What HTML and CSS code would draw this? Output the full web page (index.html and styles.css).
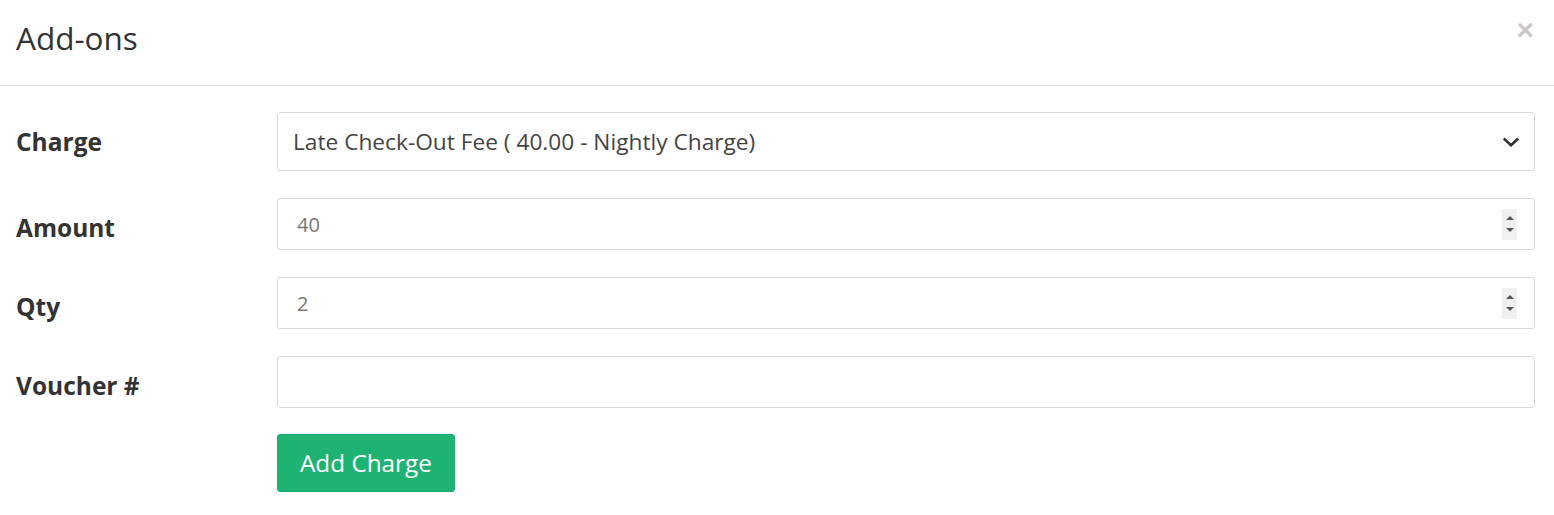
FILE: index.html
```html
<!DOCTYPE html>
<html>
<head>
<meta charset="utf-8">
<link rel="stylesheet" href="styles.css">
</head>
<body>
<div class="modal">
  <div class="modal-header">
    <h4 class="modal-title">Add-ons</h4>
    <button class="close" type="button">×</button>
  </div>
  <div class="modal-body">
    <div class="row">
      <label class="label">Charge</label>
      <div class="control select-control">
        <span class="select-text">Late Check-Out Fee ( 40.00 - Nightly Charge)</span>
        <svg class="chevron" width="18" height="10" viewBox="0 0 18 10"><path d="M1.8 1.5 L9 8.3 L16.2 1.5" fill="none" stroke="#333" stroke-width="2.6"/></svg>
      </div>
    </div>
    <div class="row">
      <label class="label">Amount</label>
      <div class="control input-control">
        <input class="field muted" type="text" value="40">
        <span class="spinner"><span class="up"></span><span class="down"></span></span>
      </div>
    </div>
    <div class="row">
      <label class="label">Qty</label>
      <div class="control input-control">
        <input class="field muted" type="text" value="2">
        <span class="spinner"><span class="up"></span><span class="down"></span></span>
      </div>
    </div>
    <div class="row">
      <label class="label">Voucher #</label>
      <div class="control input-control">
        <input class="field" type="text" value="">
      </div>
    </div>
    <div class="row">
      <span class="label"></span>
      <button class="btn-add" type="button">Add Charge</button>
    </div>
  </div>
</div>
</body>
</html>
```
FILE: styles.css
```css
* { box-sizing: border-box; }
html, body { margin: 0; padding: 0; background: #fff; }
body { font-family: "Open Sans", "Noto Sans", sans-serif; color: #333; }

.modal { width: 1554px; }

.modal-header {
  display: flex;
  justify-content: space-between;
  align-items: flex-start;
  height: 86px;
  border-bottom: 1px solid #e5e5e5;
  padding: 16px 20px 0 16px;
}
.modal-title {
  margin: 0;
  font-size: 31.5px;
  font-weight: 400;
  line-height: 44px;
  color: #333;
}
.close {
  border: 0;
  background: none;
  padding: 0;
  margin-top: 0;
  font-family: "Liberation Sans", Arial, sans-serif;
  font-size: 30px;
  font-weight: 700;
  line-height: 28px;
  color: #c9c9c9;
  cursor: pointer;
}

.modal-body {
  padding: 26px 19px 20px 16px;
  display: flex;
  flex-direction: column;
  gap: 27px;
}
.row {
  display: flex;
  align-items: flex-start;
}
.label {
  width: 261px;
  flex: none;
  font-size: 24.5px;
  font-weight: 700;
  line-height: 34px;
  padding-top: 13px;
  color: #333;
}
.control {
  flex: 1;
  display: flex;
  align-items: center;
  border: 1px solid #d9d9d9;
  border-radius: 3px;
  background: #fff;
}
.select-control {
  height: 59px;
  padding: 0 15px 0 15px;
  justify-content: space-between;
}
.select-text { font-size: 22.7px; color: #444; }
.chevron { display: block; margin-right: -1px; }

.input-control {
  height: 52px;
  padding: 0 17px 0 19px;
}
.field {
  flex: 1;
  border: 0;
  outline: none;
  padding: 0;
  font-family: inherit;
  font-size: 20px;
  color: #333;
  background: transparent;
  min-width: 0;
}
.field.muted { color: #777; }
.spinner {
  width: 15px;
  height: 31px;
  background: #f0f0f0;
  display: flex;
  flex-direction: column;
  align-items: center;
  justify-content: center;
  gap: 8px;
}
.spinner .up {
  width: 0; height: 0;
  border-left: 4px solid transparent;
  border-right: 4px solid transparent;
  border-bottom: 4px solid #555;
}
.spinner .down {
  width: 0; height: 0;
  border-left: 4px solid transparent;
  border-right: 4px solid transparent;
  border-top: 4px solid #555;
}

.btn-add {
  background: #1eb373;
  color: #fff;
  border: 1px solid #1cae6f;
  border-radius: 3px;
  font-family: inherit;
  font-size: 24.3px;
  height: 58px;
  padding: 0 22px;
  line-height: 1;
  margin-top: -1px;
  cursor: pointer;
}
```
